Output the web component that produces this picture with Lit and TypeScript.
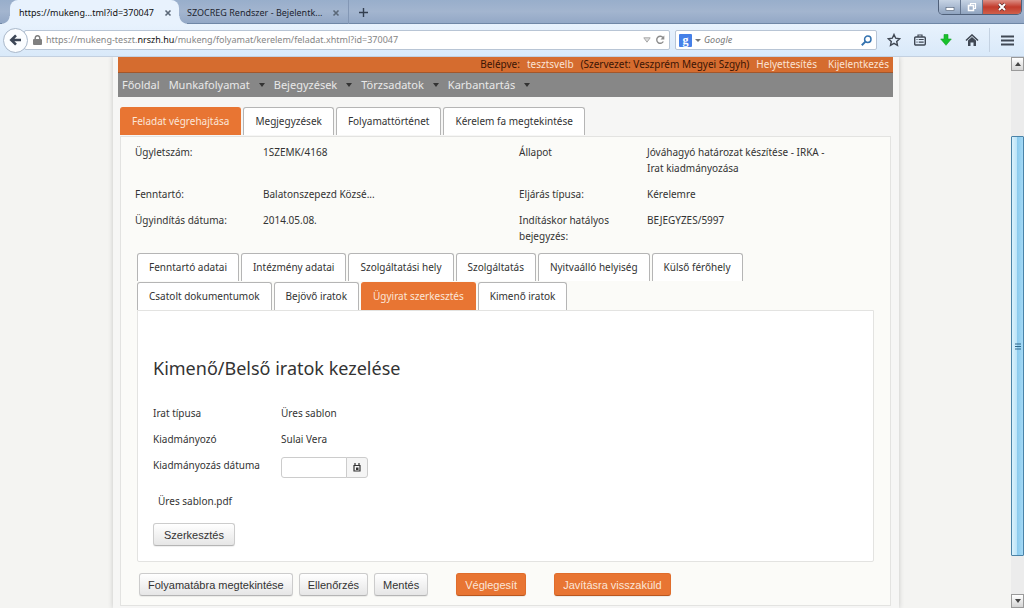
import { LitElement, html, css } from "lit";
import { customElement } from "lit/decorators.js";

@customElement("browser-chrome")
class BrowserChrome extends LitElement {
  static styles = css`
    :host { display: block; font: 9px/14px "Noto Sans", sans-serif; color: #1c2430; }
    * { box-sizing: border-box; }
    button { font: inherit; border: 0; padding: 0; background: none; color: inherit; display: flex; align-items: center; justify-content: center; }
    svg { display: block; }
    .strip { display: flex; height: 24px; background: linear-gradient(#98aecb, #a3b5cf 50%, #93a8c6); border-bottom: 1px solid #6f87a6; padding-left: 10px; white-space: nowrap; }
    .tab { display: flex; align-items: center; justify-content: space-between; height: 24px; padding: 2px 7px 0 9px; width: 169px; position: relative; }
    .tab.active { background: #e8f2fd; border-radius: 8px 8px 0 0; color: #111; }
    .tab.active::before, .tab.active::after { content: ""; position: absolute; bottom: 0; width: 8px; height: 8px; }
    .tab.active::before { left: -8px; background: radial-gradient(circle at 0 0, transparent 7px, #e8f2fd 8px); }
    .tab.active::after { right: -8px; background: radial-gradient(circle at 100% 0, transparent 7px, #e8f2fd 8px); }
    .tab.other { width: 170px; padding: 2px 8px 0 8px; border-right: 1px solid #8397b5; }
    .add { width: 28px; padding-top: 2px; }
    .win { margin-left: auto; margin-right: 2px; display: flex; height: 15px; border: 1px solid #4f6079; border-top: 0; border-radius: 0 0 5px 5px; overflow: hidden; }
    .win button { width: 22px; background: linear-gradient(#c6d3e4, #8fa3bf); border-right: 1px solid #63748e; }
    .win .close { width: 38px; border-right: 0; background: linear-gradient(#dc8f85, #c23b2c 50%, #d0604a); }
    .bar { display: flex; align-items: center; height: 33px; background: linear-gradient(#e8f2fd, #d9e9f9); padding: 0 3px; border-bottom: 1px solid #c3d0e0; }
    .back { width: 25px; height: 25px; border-radius: 50%; border: 1px solid #a9b8ca; background: #fbfdff; flex: none; margin-right: -4px; z-index: 1; }
    .url { display: flex; align-items: center; flex: 1; height: 20px; background: #fff; border: 1px solid #b8c5d5; border-radius: 2px; padding: 0 4px 0 8px; color: #858585; gap: 4px; white-space: nowrap; }
    .url .addr { flex: 1; }
    .url b { font-weight: 400; color: #111; }
    .search { display: flex; align-items: center; width: 202px; height: 20px; margin-left: 5px; background: #fff; border: 1px solid #b8c5d5; border-radius: 2px; padding: 0 4px 0 3px; gap: 3px; }
    .g { width: 13px; height: 13px; background: #4580e8; border-radius: 1px; color: #fff; font: 700 12px/12px "Liberation Serif", serif; text-align: center; }
    .search input { flex: 1; min-width: 0; border: 0; outline: 0; padding: 0; font: italic 9px/14px "Noto Sans", sans-serif; background: none; }
    .search input::placeholder { color: #777; opacity: 1; }
    .tools { display: flex; align-items: center; margin-left: 4px; color: #404854; }
    .tools button { width: 26px; height: 24px; }
    .tools .burger { width: 32px; border-left: 1px solid #c4d2e2; margin-left: 4px; padding-left: 4px; }
  `;
  render() {
    const x = html`<button aria-label="Lap bezárása"><svg width="8" height="8"><path d="M1.500 1.500l5 5m0-5l-5 5" stroke="#5b6878" stroke-width="1.600"/></svg></button>`;
    return html`
      <div class="strip">
        <div class="tab active"><span>https://mukeng...tml?id=370047</span>${x}</div>
        <div class="tab other"><span>SZOCREG Rendszer - Bejelentk...</span>${x}</div>
        <button class="add" aria-label="Új lap"><svg width="9" height="9"><path d="M4.500 0v9M0 4.500h9" stroke="#333f50" stroke-width="1.400"/></svg></button>
        <div class="win">
          <button aria-label="Kis méret"><svg width="10" height="10"><rect x="1" y="5.500" width="8" height="3" fill="#fff" stroke="#4b5a70" stroke-width=".6"/></svg></button>
          <button aria-label="Teljes méret"><svg width="10" height="10" fill="none"><path d="M3.500 3V1.500h5v5H7" stroke="#fff" stroke-width="1.200"/><rect x="1.500" y="3.500" width="5" height="5" stroke="#fff" stroke-width="1.500"/></svg></button>
          <button class="close" aria-label="Bezárás"><svg width="10" height="10"><path d="M2 2l6 6m0-6l-6 6" stroke="#5d2a2a" stroke-width="3.200"/><path d="M2 2l6 6m0-6l-6 6" stroke="#fff" stroke-width="2"/></svg></button>
        </div>
      </div>
      <div class="bar">
        <button class="back" aria-label="Vissza"><svg width="13" height="12"><path d="M12 6H2.500M7 1.300L2.300 6 7 10.700" fill="none" stroke="#3c4656" stroke-width="2.600"/></svg></button>
        <div class="url">
          <svg width="9" height="10"><path d="M2.200 5V3a2.300 2.300 0 0 1 4.600 0v2" fill="none" stroke="#808080" stroke-width="1.500"/><rect y="4" width="9" height="6" rx="1" fill="#808080"/></svg>
          <span class="addr">https://mukeng-teszt.<b>nrszh.hu</b>/mukeng/folyamat/kerelem/feladat.xhtml?id=370047</span>
          <svg width="8" height="6"><path d="M.8.800h6.400L4 5.200z" fill="#ddd" stroke="#aaa"/></svg>
          <button aria-label="Frissítés"><svg width="10" height="10"><path d="M8 2.600A3.500 3.500 0 1 0 8.300 6.500" fill="none" stroke="#8c8c8c" stroke-width="1.400"/><path d="M9.300.500v4H5.500z" fill="#8c8c8c"/></svg></button>
        </div>
        <div class="search">
          <span class="g">g</span>
          <svg width="6" height="3"><path d="M0 0h6L3 3z" fill="#777"/></svg>
          <input aria-label="Keresés" placeholder="Google">
          <button aria-label="Keresés indítása"><svg width="11" height="11" fill="none" stroke="#3573b0"><circle cx="6.800" cy="4.200" r="3.200" stroke-width="1.500"/><path d="M4.400 6.600L.800 10.200" stroke-width="2"/></svg></button>
        </div>
        <div class="tools">
          <button aria-label="Könyvjelző"><svg width="14" height="14"><path d="M7 1.500l1.700 3.700 4 .500-3 2.700.800 4L7 10.400l-3.500 2 .800-4-3-2.700 4-.5z" fill="none" stroke="currentColor" stroke-width="1.400"/></svg></button>
          <button aria-label="Könyvjelzők listája"><svg width="12" height="12" fill="none" stroke="currentColor"><path d="M4 3V1h4v2" stroke-width="1.200"/><rect x=".7" y="3" width="10.600" height="8" rx="1" stroke-width="1.400"/><path d="M2.500 5.500h1m1.200 0h5M2.500 8.200h1m1.200 0h5" stroke-width="1.200"/></svg></button>
          <button aria-label="Letöltések"><svg width="12" height="12"><path d="M4 .500h4V5h3.300L6 11.300.700 5H4z" fill="#19c12b" stroke="#11a322" stroke-width=".6"/></svg></button>
          <button aria-label="Kezdőlap"><svg width="14" height="12"><path d="M1 6.500L7 1l6 5.500" fill="none" stroke="currentColor" stroke-width="1.600"/><path d="M3 6.500L7 3l4 3.500V12H8.500V8.500h-3V12H3z" fill="currentColor"/></svg></button>
          <button class="burger" aria-label="Menü"><svg width="13" height="11"><path d="M0 1.500h13M0 5.500h13M0 9.500h13" stroke="currentColor" stroke-width="2.200"/></svg></button>
        </div>
      </div>`;
  }
}

@customElement("app-root")
class AppRoot extends LitElement {
  static styles = css`
    :host { display: flex; flex-direction: column; height: 100vh; overflow: hidden; font: 10px/16px "Noto Sans", sans-serif; color: #333; background: #f4f4f2; }
    * { box-sizing: border-box; }
    a { text-decoration: none; color: inherit; }
    h1 { font-size: 18px; line-height: 26px; font-weight: 400; margin: 43px 0 24px; color: #333; }
    dl, dd, dt { margin: 0; }
    .view { flex: 1; min-height: 0; display: flex; }
    .scroll { flex: 1; overflow: hidden; padding: 0 112px 0 113px; }
    .sheet { min-height: 100%; background: #f6f6f5; box-shadow: 0 0 5px #c4c4c4; padding: 0 6px 0 5px; }
    .user { display: flex; justify-content: flex-end; gap: 7px; height: 16px; padding: 0 4px; line-height: 14px; font-size: 10px; background: #d56c2f; color: #3a1505; border-bottom: 1px solid #a2572c; white-space: nowrap; }
    .user a { color: #fbe3d4; }
    .user a:last-child { margin-left: 4px; }
    .nav { display: flex; align-items: center; height: 24px; background: #878787; padding-left: 4px; font-size: 11px; color: #e9e9e9; gap: 9px; }
    .nav a { display: flex; align-items: center; }
    .caret { margin-left: 9px; border: 3px solid transparent; border-top: 4px solid #333; border-bottom: 0; }
    .body { padding: 10px 2px 0; }
    .tabs { display: flex; flex-wrap: wrap; gap: 1px 2px; padding-right: 40px; }
    .tabs button { font: inherit; color: #333; height: 28px; padding: 0 11px 2px; background: #fff; border: 1px solid #b5b5b5; border-bottom: 0; border-radius: 3px 3px 0 0; white-space: nowrap; }
    .tabs button[aria-selected="true"] { background: #e87533; border-color: #e87533; color: #fbe6d8; }
    .panel { background: #fbfbf8; border: 1px solid #e3e3e1; padding: 7px 16px 9px; margin-top: 1px; }
    .info { display: grid; grid-template-columns: 128px 256px 128px 188px; row-gap: 10px; padding-bottom: 9px; margin-left: -2px; }
    .info dt:nth-of-type(2n) { padding-right: 20px; }
    .inner { background: #fff; border: 1px solid #e3e3e1; border-radius: 0 0 2px 2px; padding: 1px 15px 15px; }
    .form { display: grid; grid-template-columns: 128px 1fr; row-gap: 10px; }
    .date { display: flex; height: 21px; }
    .date input { width: 66px; border: 1px solid #ccc; border-radius: 3px 0 0 3px; font: inherit; padding: 0 4px; background: #fff; }
    .date button { width: 22px; margin-left: -1px; padding: 0; border: 1px solid #ccc; border-radius: 0 3px 3px 0; background: #f5f5f5; display: flex; align-items: center; justify-content: center; }
    .file { display: inline-block; margin: 15px 5px 14px; }
    .btn { font: 11px/16px "Liberation Sans", sans-serif; color: #333; height: 23px; padding: 0 8px; border: 1px solid #ccc; border-bottom-color: #b5b5b5; border-radius: 3px; background: linear-gradient(#fff, #e6e6e6); box-shadow: 0 1px 1px #0001; white-space: nowrap; }
    .edit { display: block; padding: 0 10px; }
    .actions { display: flex; gap: 6px; padding: 11px 2px 0; }
    .hot { background: #e87533; border-color: #e06d2c; border-bottom-color: #b9571f; color: #fbe6d8; margin-left: 22px; }
    .bar { width: 13px; flex: none; display: flex; flex-direction: column; background: #ececec; }
    .bar button { height: 14px; padding: 0; border: 1px solid #9a9a9a; background: linear-gradient(#fff, #d4d4d4); display: flex; align-items: center; justify-content: center; }
    .track { flex: 1; display: flex; flex-direction: column; padding: 65px 0 38px; }
    .thumb { flex: 1; border: 1px solid #4a83a8; border-radius: 1px; background: linear-gradient(90deg, #d9f1fc, #b8e2f8 50%, #8ccbee 50%, #a5d9f5); display: flex; align-items: center; justify-content: center; }
  `;
  tabs(items: string[], active: string, label: string) {
    return html`<div class="tabs" role="tablist" aria-label=${label}>${items.map(t => html`<button role="tab" aria-selected=${t === active ? "true" : "false"}>${t}</button>`)}</div>`;
  }
  render() {
    const arrow = (d: string) => html`<svg width="6" height="4"><path d=${d} fill="#444"/></svg>`;
    return html`
      <browser-chrome></browser-chrome>
      <div class="view">
        <div class="scroll"><div class="sheet">
          <div class="user"><span>Belépve:</span><a href="#">tesztsvelb</a><span>(Szervezet: Veszprém Megyei Szgyh)</span><a href="#">Helyettesítés</a><a href="#">Kijelentkezés</a></div>
          <nav class="nav"><a href="#">Főoldal</a>${["Munkafolyamat", "Bejegyzések", "Törzsadatok", "Karbantartás"].map(t => html`<a href="#">${t}<span class="caret"></span></a>`)}</nav>
          <main class="body">
            ${this.tabs(["Feladat végrehajtása", "Megjegyzések", "Folyamattörténet", "Kérelem fa megtekintése"], "Feladat végrehajtása", "Feladat")}
            <section class="panel">
              <dl class="info">
                <dt>Ügyletszám:</dt><dd>1SZEMK/4168</dd><dt>Állapot</dt><dd>Jóváhagyó határozat készítése - IRKA - Irat kiadmányozása</dd>
                <dt>Fenntartó:</dt><dd>Balatonszepezd Közsé...</dd><dt>Eljárás típusa:</dt><dd>Kérelemre</dd>
                <dt>Ügyindítás dátuma:</dt><dd>2014.05.08.</dd><dt>Indításkor hatályos bejegyzés:</dt><dd>BEJEGYZES/5997</dd>
              </dl>
              ${this.tabs(["Fenntartó adatai", "Intézmény adatai", "Szolgáltatási hely", "Szolgáltatás", "Nyitvaálló helyiség", "Külső férőhely", "Csatolt dokumentumok", "Bejövő iratok", "Ügyirat szerkesztés", "Kimenő iratok"], "Ügyirat szerkesztés", "Adatok")}
              <div class="inner">
                <h1>Kimenő/Belső iratok kezelése</h1>
                <div class="form">
                  <span>Irat típusa</span><span>Üres sablon</span>
                  <span>Kiadmányozó</span><span>Sulai Vera</span>
                  <label for="date">Kiadmányozás dátuma</label>
                  <div class="date"><input id="date" type="text"><button aria-label="Naptár"><svg width="8" height="9"><path d="M1 2.500h6v5.500H1zM2 0v2M6 0v2" fill="none" stroke="#333" stroke-width="1.200"/><rect x="3" y="4.500" width="2.500" height="2.500" fill="#333"/></svg></button></div>
                </div>
                <a class="file" href="#">Üres sablon.pdf</a>
                <button class="btn edit">Szerkesztés</button>
              </div>
              <div class="actions">
                <button class="btn">Folyamatábra megtekintése</button><button class="btn">Ellenőrzés</button><button class="btn">Mentés</button>
                <button class="btn hot">Véglegesít</button><button class="btn hot">Javításra visszaküld</button>
              </div>
            </section>
          </main>
        </div></div>
        <div class="bar"><button aria-label="Fel">${arrow("M0 4h6L3 0z")}</button><div class="track"><div class="thumb"><svg width="6" height="7"><path d="M0 1h6M0 3.500h6M0 6h6" stroke="#30688c"/></svg></div></div><button aria-label="Le">${arrow("M0 0h6L3 4z")}</button></div>
      </div>`;
  }
}
